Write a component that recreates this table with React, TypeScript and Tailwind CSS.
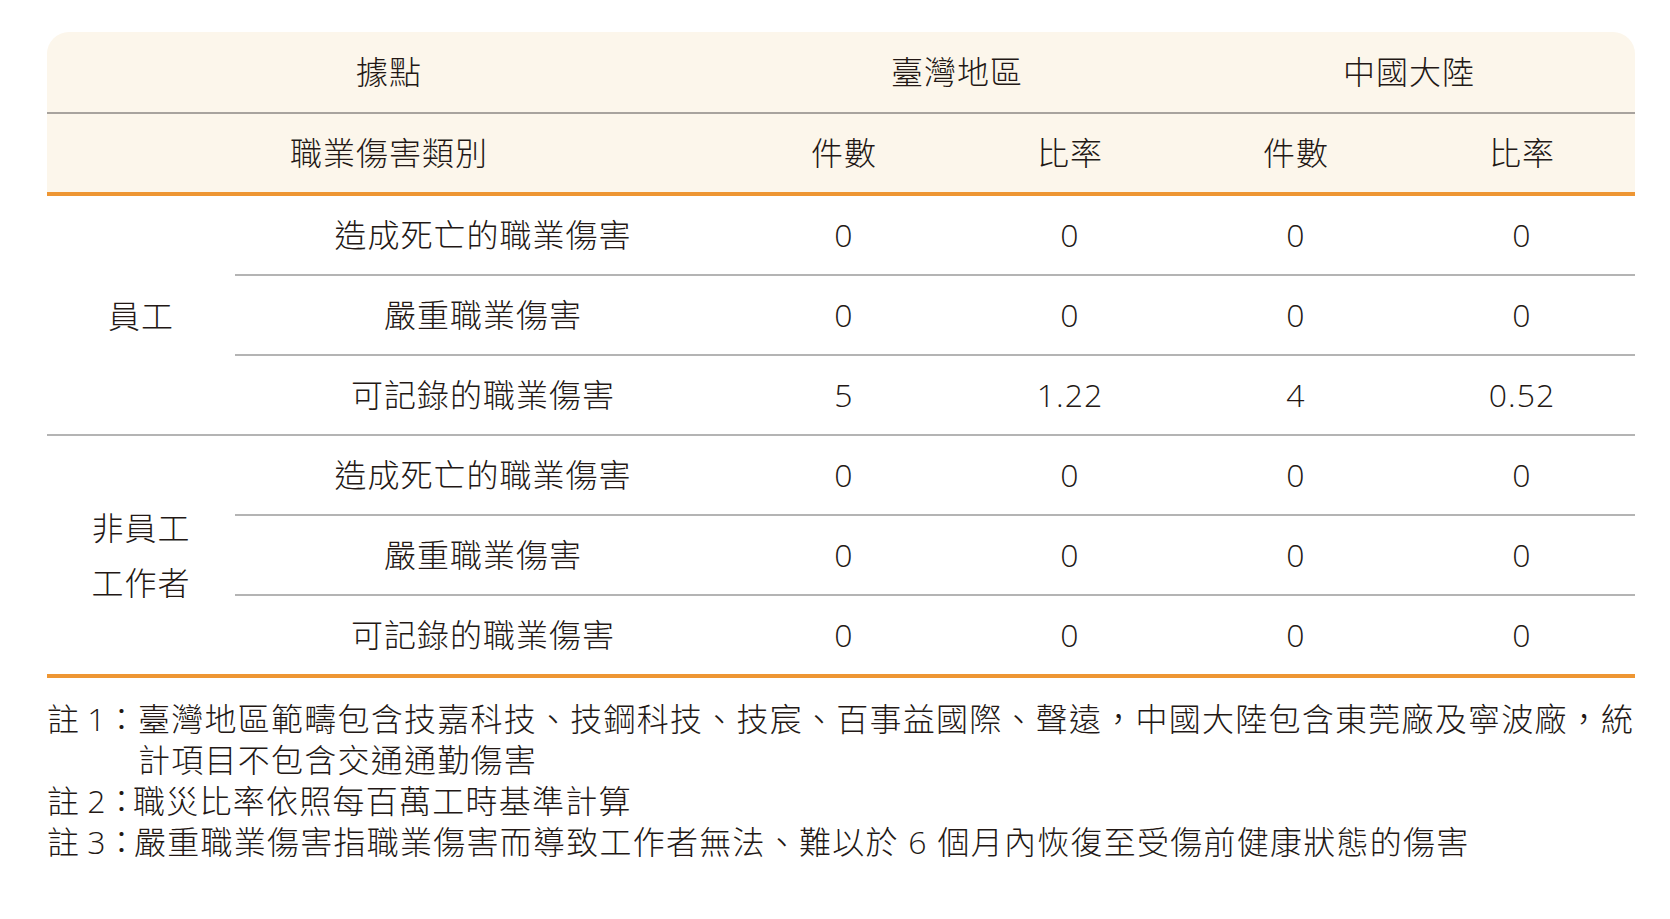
import React from 'react';

const font = { fontFamily: '"Open Sans", "Noto Sans CJK TC", sans-serif' };

type Row = { label: string; values: string[] };

const groups: { name: string[]; rows: Row[] }[] = [
  {
    name: ['員工'],
    rows: [
      { label: '造成死亡的職業傷害', values: ['0', '0', '0', '0'] },
      { label: '嚴重職業傷害', values: ['0', '0', '0', '0'] },
      { label: '可記錄的職業傷害', values: ['5', '1.22', '4', '0.52'] },
    ],
  },
  {
    name: ['非員工', '工作者'],
    rows: [
      { label: '造成死亡的職業傷害', values: ['0', '0', '0', '0'] },
      { label: '嚴重職業傷害', values: ['0', '0', '0', '0'] },
      { label: '可記錄的職業傷害', values: ['0', '0', '0', '0'] },
    ],
  },
];

const notes = [
  {
    label: '註 1：',
    width: 'w-[91px]',
    lines: ['臺灣地區範疇包含技嘉科技、技鋼科技、技宸、百事益國際、聲遠，中國大陸包含東莞廠及寧波廠，統', '計項目不包含交通通勤傷害'],
  },
  { label: '註 2：', width: 'w-[86px]', lines: ['職災比率依照每百萬工時基準計算'] },
  { label: '註 3：', width: 'w-[87px]', lines: ['嚴重職業傷害指職業傷害而導致工作者無法、難以於 6 個月內恢復至受傷前健康狀態的傷害'] },
];

function App() {
  return (
    <div className="min-h-screen bg-white text-[#231815] font-light" style={font}>
      <div className="w-[1588px] ml-[47px] pt-[32px]">
        {/* Header */}
        <div className="bg-[#fcf6eb] rounded-t-[22px] text-[32px] tracking-[1px]">
          <div className="grid grid-cols-[684px_452px_452px] h-[82px] border-b-2 border-[#a8a39e]">
            <div className="flex items-center justify-center">據點</div>
            <div className="flex items-center justify-center">臺灣地區</div>
            <div className="flex items-center justify-center">中國大陸</div>
          </div>
          <div className="grid grid-cols-[684px_226px_226px_226px_226px] h-[82px] border-b-4 border-[#ee9633]">
            <div className="flex items-center justify-center">職業傷害類別</div>
            <div className="flex items-center justify-center">件數</div>
            <div className="flex items-center justify-center">比率</div>
            <div className="flex items-center justify-center">件數</div>
            <div className="flex items-center justify-center">比率</div>
          </div>
        </div>

        {/* Body */}
        {groups.map((g, gi) => (
          <div
            key={gi}
            className={`grid grid-cols-[188px_1400px] text-[32px] tracking-[1px] ${
              gi === groups.length - 1 ? 'border-b-4 border-[#ee9633]' : 'border-b-2 border-[#b4b4b4]'
            }`}
          >
            <div className="flex flex-col items-center justify-center leading-[55px]">
              {g.name.map((n) => (
                <div key={n}>{n}</div>
              ))}
            </div>
            <div>
              {g.rows.map((r, ri) => (
                <div
                  key={ri}
                  className={`grid grid-cols-[496px_226px_226px_226px_226px] h-[78px] ${
                    ri < g.rows.length - 1 ? 'border-b-2 border-[#b4b4b4] h-[80px]' : ''
                  }`}
                >
                  <div className="flex items-center justify-center">{r.label}</div>
                  {r.values.map((v, vi) => (
                    <div key={vi} className="flex items-center justify-center">
                      {v}
                    </div>
                  ))}
                </div>
              ))}
            </div>
          </div>
        ))}

        {/* Notes */}
        <div className="mt-[20px] text-[32px] leading-[41px]">
          {notes.map((n) => (
            <div key={n.label} className="flex">
              <div className={`shrink-0 whitespace-pre ${n.width}`}>{n.label}</div>
              <div className="tracking-[1.25px]">
                {n.lines.map((l) => (
                  <div key={l} className="whitespace-nowrap">
                    {l}
                  </div>
                ))}
              </div>
            </div>
          ))}
        </div>
      </div>
    </div>
  );
}

export default App;
